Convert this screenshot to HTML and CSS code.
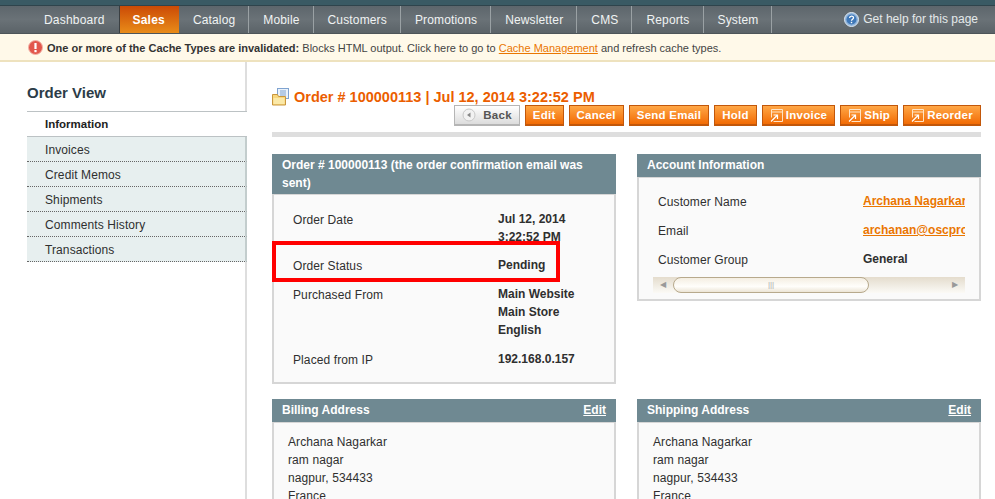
FILE: index.html
```html
<!DOCTYPE html>
<html lang="en">
<head>
<meta charset="utf-8">
<title>Order View</title>
<link rel="stylesheet" href="styles.css">
</head>
<body>
<div class="page">
  <div class="topbar"></div>
  <nav class="nav">
    <ul class="menu">
      <li class="first">Dashboard</li>
      <li class="active">Sales</li>
      <li>Catalog</li>
      <li>Mobile</li>
      <li>Customers</li>
      <li>Promotions</li>
      <li>Newsletter</li>
      <li>CMS</li>
      <li>Reports</li>
      <li>System</li>
    </ul>
    <a class="help">
      <svg width="15" height="15" viewBox="0 0 15 15"><circle cx="7.5" cy="7.5" r="7" fill="#8fb4dc" stroke="#dfe9f2" stroke-width="1"/><circle cx="7.5" cy="7.5" r="5" fill="#3f78b8"/><path d="M5.6 6c0-2.4 3.9-2.4 3.9-.3 0 1.400-2 1.500-2 3" fill="none" stroke="#fff" stroke-width="1.300"/><rect x="6.800" y="9.800" width="1.400" height="1.400" fill="#fff"/></svg>
      Get help for this page
    </a>
  </nav>
  <div class="notice">
    <svg class="notice-icon" width="15" height="15" viewBox="0 0 15 15"><circle cx="7.5" cy="7.5" r="7" fill="#e2574c" stroke="#f3b3a8"/><rect x="6.400" y="3" width="2.200" height="6" fill="#fff"/><rect x="6.400" y="10" width="2.200" height="2.200" fill="#fff"/></svg>
    <p><b>One or more of the Cache Types are invalidated:</b> Blocks HTML output. Click here to go to <a>Cache Management</a> and refresh cache types.</p>
  </div>
  <div class="layout">
    <aside class="side">
      <h3 class="side-title">Order View</h3>
      <ul class="tabs">
        <li class="tab-active">Information</li>
        <li>Invoices</li>
        <li>Credit Memos</li>
        <li>Shipments</li>
        <li>Comments History</li>
        <li>Transactions</li>
      </ul>
    </aside>
    <main class="content">
      <h3 class="heading">
        <svg width="18" height="18" viewBox="0 0 18 18"><rect x="5.500" y="0.500" width="11" height="10" fill="#eaf2fb" stroke="#7fa3d0"/><path d="M8 3h6M8 5h6M8 7h6" stroke="#7fa3d0"/><path d="M0.500 6.500h5l1 2h7v8.500h-13z" fill="#f8d77e" stroke="#c9963c"/><rect x="1.500" y="10" width="11" height="6" fill="#fbe9a8"/></svg>
        Order # 100000113 | Jul 12, 2014 3:22:52 PM
      </h3>
      <div class="actions">
        <button class="btn btn-back"><svg width="14" height="14" viewBox="0 0 14 14"><circle cx="7" cy="7" r="6" fill="#f2f2f2" stroke="#c8c8c8"/><path d="M8.500 4.500v5l-3.500-2.500z" fill="#888"/></svg>Back</button>
        <button class="btn">Edit</button>
        <button class="btn">Cancel</button>
        <button class="btn">Send Email</button>
        <button class="btn">Hold</button>
        <button class="btn btn-icon"><svg width="13" height="13" viewBox="0 0 13 13"><path d="M3.500 12.500h9v-12h-11v8M1.500 3h11" fill="none" stroke="#ffe3c4"/><path d="M1 12.500l6-6M3.500 6h4v4" fill="none" stroke="#fff" stroke-width="1.200"/></svg>Invoice</button>
        <button class="btn btn-icon"><svg width="13" height="13" viewBox="0 0 13 13"><path d="M3.500 12.500h9v-12h-11v8M1.500 3h11" fill="none" stroke="#ffe3c4"/><path d="M1 12.500l6-6M3.500 6h4v4" fill="none" stroke="#fff" stroke-width="1.200"/></svg>Ship</button>
        <button class="btn btn-icon"><svg width="13" height="13" viewBox="0 0 13 13"><path d="M3.500 12.500h9v-12h-11v8M1.500 3h11" fill="none" stroke="#ffe3c4"/><path d="M1 12.500l6-6M3.500 6h4v4" fill="none" stroke="#fff" stroke-width="1.200"/></svg>Reorder</button>
      </div>
      <div class="rule"></div>
      <div class="panels">
        <section class="panel panel-order">
          <h4 class="panel-head">Order # 100000113 (the order confirmation email was sent)</h4>
          <div class="panel-body info">
            <div class="row row-date"><span class="label">Order Date</span><strong class="value">Jul 12, 2014<br>3:22:52 PM</strong></div>
            <div class="row"><span class="label">Order Status</span><strong class="value">Pending</strong></div>
            <div class="row"><span class="label">Purchased From</span><strong class="value">Main Website<br>Main Store<br>English</strong></div>
            <div class="row"><span class="label">Placed from IP</span><strong class="value">192.168.0.157</strong></div>
          </div>
        </section>
        <section class="panel panel-account">
          <h4 class="panel-head">Account Information</h4>
          <div class="panel-body account">
            <div class="clip">
              <div class="row"><span class="label">Customer Name</span><strong class="value"><a>Archana Nagarkar</a></strong></div>
              <div class="row"><span class="label">Email</span><strong class="value"><a>archanan@oscprofessionals.com</a></strong></div>
              <div class="row"><span class="label">Customer Group</span><strong class="value">General</strong></div>
            </div>
            <div class="scrollbar">
              <span class="arrow">◀</span>
              <span class="thumb">|||</span>
              <span class="arrow arrow-right">▶</span>
            </div>
          </div>
        </section>
        <section class="panel">
          <h4 class="panel-head head-split"><span>Billing Address</span><a>Edit</a></h4>
          <address class="panel-body addr">Archana Nagarkar<br>ram nagar<br>nagpur, 534433<br>France</address>
        </section>
        <section class="panel">
          <h4 class="panel-head head-split"><span>Shipping Address</span><a>Edit</a></h4>
          <address class="panel-body addr">Archana Nagarkar<br>ram nagar<br>nagpur, 534433<br>France</address>
        </section>
      </div>
    </main>
  </div>
  <div class="highlight"></div>
</div>
</body>
</html>
```
FILE: styles.css
```css
* { box-sizing: border-box; }
html, body { margin: 0; padding: 0; }
body { font-family: "Liberation Sans", Arial, sans-serif; font-size: 12px; color: #2f2f2f; background: #fff; }
.page { position: relative; width: 995px; height: 499px; overflow: hidden; }

.topbar { height: 5px; background: #3a5a64; }
.nav { height: 29px; display: flex; justify-content: space-between; background: linear-gradient(#5d666c, #6a7277 50%, #5b6368); border-top: 1px solid #2f444c; border-bottom: 1px solid #4d5559; color: #f0f3f3; }
.menu { list-style: none; margin: 0; padding: 0 0 0 30px; display: flex; height: 27px; }
.menu li { padding: 0 13px 0 14px; line-height: 28px; font-size: 12px; letter-spacing: .15px; border-right: 1px solid #9aa1a4; white-space: nowrap; }
.menu .first { border-right: 1px solid #3a3f42; padding-right: 14px; letter-spacing: .2px; }
.menu .active { background: linear-gradient(#cb4a06, #e98c19); font-weight: bold; padding: 0 14px 0 13px; letter-spacing: .2px; border-right: 0; color: #fff; }
.help { display: flex; align-items: center; gap: 4px; padding-right: 17px; font-size: 12px; height: 26px; color: #e4e9ea; }

.notice { height: 28px; display: flex; align-items: center; gap: 4px; padding: 1px 0 0 28px; background: #fff9e9; border-bottom: 2px solid #eee2be; }
.notice p { margin: 0; font-size: 11px; color: #444; }
.notice b { color: #333; }
.notice a { color: #ea7601; text-decoration: underline; }

.layout { display: flex; height: 438px; padding-left: 27px; }
.side { width: 220px; border-right: 2px solid #dedede; padding-top: 20px; margin-right: 25px; flex: none; }
.side-title { margin: 0; height: 30px; padding-top: 2px; font-size: 15px; color: #2c3c48; border-bottom: 1px solid #bcc2c4; line-height: 18px; margin-right: -2px; }
.tabs { list-style: none; margin: 0 -2px 0 0; padding: 0; }
.tabs li { height: 25px; padding-left: 18px; line-height: 26px; font-size: 12px; letter-spacing: .1px; color: #2f2f2f; background: #e7efef; border-bottom: 1px dotted #666; border-right: 2px solid #c3cdcd; }
.tabs .tab-active { background: #fff; font-size: 11.500px; line-height: 25px; letter-spacing: 0; font-weight: bold; border-bottom: 1px solid #bcc2c4; border-right: 0; color: #222; }

.content { width: 709px; flex: none; padding-top: 26px; }
.heading { margin: 0; display: flex; align-items: center; gap: 4px; height: 17px; font-size: 14.500px; color: #eb5e00; white-space: nowrap; }
.actions { display: flex; justify-content: flex-end; gap: 5px; height: 21px; }
.btn { height: 21px; padding: 0 7px; display: flex; align-items: center; font: bold 11.500px "Liberation Sans", Arial, sans-serif; letter-spacing: .25px; color: #fff; background: linear-gradient(#ffa746, #f26b04); border: 1px solid #c2570a; border-width: 1px 1px 2px; }
.btn-back { gap: 7px; color: #555; background: linear-gradient(#fff, #dcdcdc); border-color: #b5b5b5; }
.btn-icon { gap: 3px; }
.btn-icon svg { flex: none; }
.rule { height: 5px; margin-top: 6px; background: #dedede; }

.panels { display: grid; grid-template-columns: 344px 344px; column-gap: 21px; row-gap: 15px; margin-top: 17px; align-items: start; }
.panel { min-width: 0; }
.panel-head { margin: 0; padding: 2px 10px 3px; background: #6f8992; color: #fff; font-size: 12px; line-height: 18px; }
.panel-order .panel-head { padding-bottom: 2px; }
.head-split { display: flex; justify-content: space-between; }
.head-split a { text-decoration: underline; }
.panel-body { background: #fafafa; border: 2px solid #d6d6d6; border-top-width: 1px; font-size: 12px; line-height: 18px; }
.panel-order .panel-body { height: 190px; }
.panel-account .panel-body { height: 124px; }
.info { padding: 15px 14px 0 19px; }
.account { padding: 14px 14px 0 14px; }
.clip { overflow: hidden; padding-left: 5px; }
.row { display: flex; margin-bottom: 11px; white-space: nowrap; }
.row-date { margin-bottom: 10px; }
.label { width: 205px; flex: none; position: relative; top: 1px; letter-spacing: .1px; }
.value { flex: none; }
.value a { color: #ea7601; text-decoration: underline; }
.scrollbar { height: 16px; margin-top: -2px; display: flex; align-items: center; position: relative; background: linear-gradient(#e4dccd, #fbfaf6); font-size: 8px; color: #999; }
.arrow { width: 20px; text-align: center; line-height: 16px; }
.arrow-right { position: absolute; right: 0; top: 0; }
.thumb { width: 196px; height: 16px; border: 1px solid #b7a98c; border-radius: 8px; background: linear-gradient(#f4eee2, #fffefb 60%, #ece5d6); text-align: center; line-height: 14px; font-size: 8px; color: #aaa; }
.addr { font-style: normal; height: 120px; padding: 10px 14px; letter-spacing: .1px; }

.highlight { position: absolute; left: 272px; top: 241px; width: 288px; height: 41px; border: 4px solid #f00; }
```
